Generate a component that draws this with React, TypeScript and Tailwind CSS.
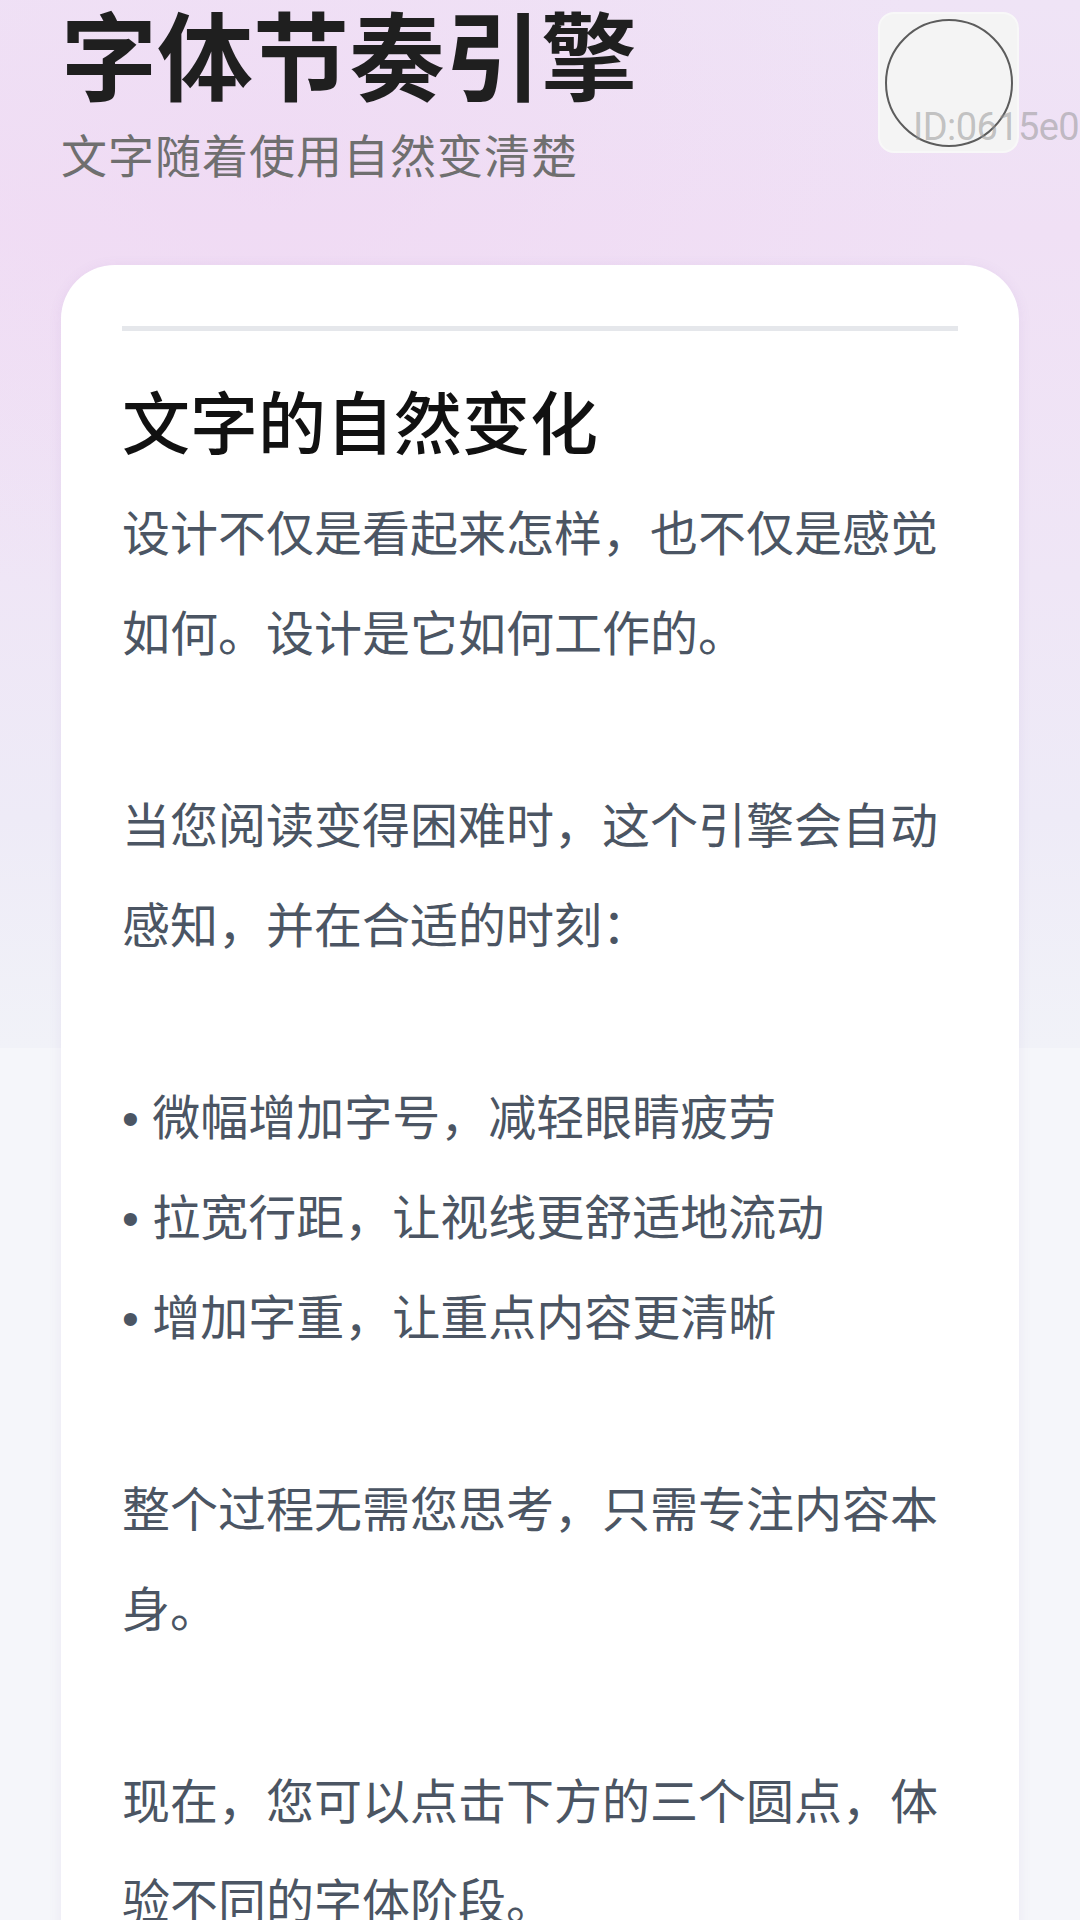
const cjk = "font-['Noto_Sans_CJK_SC','Noto_Sans',sans-serif]"

const paragraphs: (string | string[])[] = [
  '设计不仅是看起来怎样，也不仅是感觉如何。设计是它如何工作的。',
  '当您阅读变得困难时，这个引擎会自动感知，并在合适的时刻：',
  ['微幅增加字号，减轻眼睛疲劳', '拉宽行距，让视线更舒适地流动', '增加字重，让重点内容更清晰'],
  '整个过程无需您思考，只需专注内容本身。',
  '现在，您可以点击下方的三个圆点，体验不同的字体阶段。',
]

function Body() {
  return (
    <div className="mt-[16px] flex flex-col gap-[92px] text-[48px] leading-[100px] text-[#4b5563]">
      {paragraphs.map((p, i) =>
        Array.isArray(p) ? (
          <ul key={i}>
            {p.map((item) => (
              <li key={item} className="h-[100px]">
                <span className="font-['Liberation_Sans',sans-serif] leading-none">• </span>
                {item}
              </li>
            ))}
          </ul>
        ) : (
          <p key={i}>{p}</p>
        ),
      )}
    </div>
  )
}

export default function App() {
  return (
    <div className={`relative min-h-screen overflow-hidden bg-[#f5f6fa] ${cjk}`}>
      {/* soft header wash behind the top of the page */}
      <div className="absolute inset-x-0 top-0 h-[1048px] bg-[linear-gradient(180deg,#efe4f6_0%,#f0e0f5_22%,#efe6f6_55%,#eeebf7_78%,#f1f2f8_100%)]" />
      <div className="absolute inset-x-0 top-0 h-[700px] bg-[radial-gradient(ellipse_at_25%_25%,rgba(240,214,243,0.55),transparent_60%)]" />

      <div className="relative px-[61px] pt-[4px]">
        <div className="flex items-start justify-between">
          <div>
            <h1 className="text-[96px] leading-none font-bold text-[#1f1f1f]">字体节奏引擎</h1>
            <p className="mt-[21px] text-[46px] leading-[64px] tracking-[1px] text-[#6f6f6f]">
              文字随着使用自然变清楚
            </p>
          </div>
          <div className="mt-[8px] flex h-[141px] w-[141px] items-center justify-center rounded-[16px] border-2 border-[#f8f8f8] bg-[#f4f4f4]">
            <div className="h-[128px] w-[128px] rounded-full border-2 border-[#5c5c5c]" />
          </div>
        </div>

        <div className="mt-[80px] rounded-[54px] bg-white p-[61px] shadow-[0_2px_14px_rgba(120,80,160,0.08)]">
          <div className="h-[5px] bg-[#e5e7eb]" />
          <h2 className="mt-[45px] text-[68px] leading-[88px] font-medium text-[#111111]">文字的自然变化</h2>
          <Body />
        </div>
      </div>

      <span className="absolute top-[108px] left-[913px] font-['Roboto',sans-serif] text-[38px] leading-none tracking-[-0.6px] whitespace-nowrap text-[rgba(150,150,150,0.55)]">
        ID:0615e0
      </span>
    </div>
  )
}
